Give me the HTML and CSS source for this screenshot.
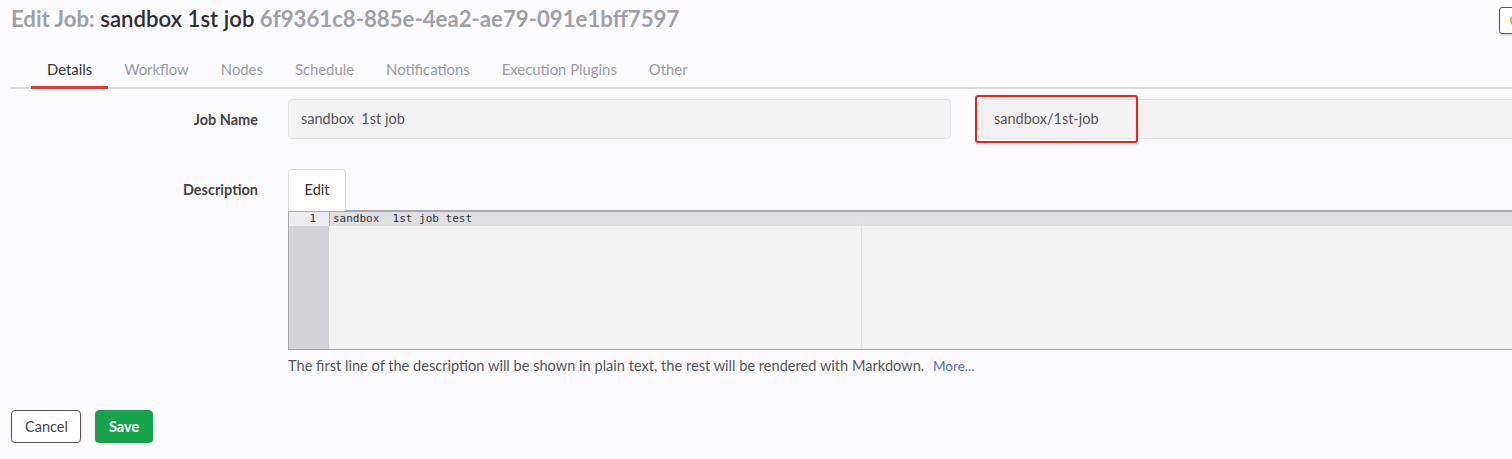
FILE: index.html
```html
<!DOCTYPE html>
<html>
<head>
<meta charset="utf-8">
<link rel="stylesheet" href="styles.css">
</head>
<body>
<div class="page">
  <header class="header">
    <h1 class="title"><span class="muted">Edit Job:</span> <span class="jobname">sandbox 1st job</span> <span class="muted">6f9361c8-885e-4ea2-ae79-091e1bff7597</span></h1>
    <button class="corner-btn"><span class="corner-dot"></span></button>
  </header>
  <nav class="tabs">
    <a class="tab active">Details</a>
    <a class="tab">Workflow</a>
    <a class="tab">Nodes</a>
    <a class="tab">Schedule</a>
    <a class="tab">Notifications</a>
    <a class="tab">Execution Plugins</a>
    <a class="tab">Other</a>
  </nav>
  <div class="row row-name">
    <label class="label">Job Name</label>
    <div class="field field-name">sandbox&nbsp; 1st job</div>
    <div class="field-group">
      <div class="field field-group-name">sandbox/1st-job</div>
      <div class="highlight"></div>
    </div>
  </div>
  <div class="row row-desc">
    <label class="label label-desc">Description</label>
    <div class="desc">
      <div class="edit-tabs"><span class="edit-tab">Edit</span></div>
      <div class="editor">
        <div class="gutter">
          <div class="gutter-line">1</div>
        </div>
        <div class="code">
          <div class="code-line">sandbox&nbsp; 1st job test</div>
          <div class="print-margin"></div>
        </div>
      </div>
      <p class="help">The first line of the description will be shown in plain text, the rest will be rendered with Markdown. <a class="more">More...</a></p>
    </div>
  </div>
  <div class="actions">
    <button class="btn btn-cancel">Cancel</button>
    <button class="btn btn-save">Save</button>
  </div>
</div>
</body>
</html>
```
FILE: styles.css
```css
html, body {
  margin: 0;
  padding: 0;
  background: #fbfbfd;
  overflow: hidden;
}
body {
  font-family: Lato, "Liberation Sans", sans-serif;
  color: #333;
}
.page {
  width: 1580px;
  padding-left: 11px;
}
.header {
  display: flex;
  align-items: flex-start;
  height: 50px;
}
.title {
  margin: 6px 0 0 0;
  font-size: 22.2px;
  line-height: 26px;
  font-weight: 700;
  white-space: nowrap;
}
.muted {
  color: #a0a0a6;
}
.jobname {
  color: #2f2f33;
  font-weight: 600;
}
.corner-btn {
  margin-left: auto;
  margin-right: 58px;
  margin-top: 7px;
  width: 34px;
  height: 27px;
  border: 1px solid #555;
  border-radius: 3px;
  background: #fff;
  box-shadow: 0 2px 3px rgba(0,0,0,0.15);
  padding: 0 0 0 10px;
  display: flex;
  align-items: center;
}
.corner-dot {
  width: 7px;
  height: 9px;
  border-radius: 50%;
  background: #f0a040;
}
.tabs {
  display: flex;
  border-bottom: 2px solid #d9d9dc;
}
.tab {
  display: block;
  padding: 0 16px;
  height: 39px;
  line-height: 38px;
  font-size: 14.85px;
  color: #9a9aa2;
  border-bottom: 3px solid transparent;
  margin-bottom: -2px;
  box-sizing: border-box;
}
.tab:first-child {
  margin-left: 20px;
}
.tab.active {
  color: #333;
  border-bottom-color: #d93a3f;
}
.row {
  display: flex;
}
.label {
  width: 247px;
  margin-right: 30px;
  text-align: right;
  font-size: 14.5px;
  font-weight: 700;
  color: #444;
  flex: none;
}
.row-name {
  margin-top: 10px;
  align-items: center;
}
.field {
  box-sizing: border-box;
  height: 40px;
  line-height: 38px;
  background: #f2f2f3;
  border: 1px solid #e3e3e6;
  border-radius: 4px;
  padding: 0 12px;
  font-size: 14.5px;
  color: #555;
}
.field-name {
  width: 663px;
  flex: none;
}
.field-group {
  position: relative;
  margin-left: 30px;
  flex: 1;
}
.field-group-name {
  width: 100%;
}
.highlight {
  position: absolute;
  left: -6px;
  top: -4px;
  width: 163px;
  height: 48px;
  box-sizing: border-box;
  border: 2px solid #f21f1f;
  border-radius: 3px;
}
.row-desc {
  margin-top: 30px;
}
.label-desc {
  margin-top: 12px;
}
.desc {
  flex: 1;
}
.edit-tabs {
  display: flex;
  height: 41px;
}
.edit-tab {
  display: block;
  box-sizing: border-box;
  width: 58px;
  height: 42px;
  line-height: 40px;
  text-align: center;
  background: #fff;
  border: 1px solid #ddd;
  border-bottom: none;
  border-radius: 4px 4px 0 0;
  font-size: 14.5px;
  color: #333;
  position: relative;
  z-index: 1;
}
.editor {
  display: flex;
  height: 140px;
  box-sizing: border-box;
  border: 1px solid #a9a9ad;
  border-top: 2px solid #a9a9ad;
  background: #f2f2f3;
}
.gutter {
  width: 40px;
  background: #d4d3d8;
  flex: none;
}
.gutter-line {
  height: 14px;
  line-height: 14px;
  background: #ececee;
  font-family: "DejaVu Sans Mono", monospace;
  font-size: 11px;
  color: #333;
  text-align: right;
  padding-right: 13px;
}
.code {
  flex: 1;
  position: relative;
}
.code-line {
  height: 14px;
  line-height: 14px;
  background: #e0e0e2;
  font-family: "DejaVu Sans Mono", monospace;
  font-size: 11px;
  color: #333;
  padding-left: 3px;
  border-left: 1px solid #aaa;
}
.print-margin {
  position: absolute;
  left: 532px;
  top: 0;
  bottom: 0;
  width: 1px;
  background: #e2e2e4;
}
.help {
  margin: 7px 0 0 0;
  font-size: 14.6px;
  color: #555;
}
.more {
  color: #4a6ed0;
  font-size: 13.5px;
  margin-left: 5px;
}
.actions {
  display: flex;
  gap: 14px;
  margin-top: 36px;
}
.btn {
  font-family: Lato, "Liberation Sans", sans-serif;
  height: 33px;
  border-radius: 4px;
  font-size: 14.5px;
  padding: 0 13px;
  box-shadow: 0 2px 3px rgba(0,0,0,0.15);
}
.btn-cancel {
  background: #fff;
  border: 1px solid #555;
  color: #444;
  width: 70px;
}
.btn-save {
  background: #17a34a;
  border: 1px solid #17a34a;
  color: #fff;
  font-weight: 700;
  width: 58px;
}
```
